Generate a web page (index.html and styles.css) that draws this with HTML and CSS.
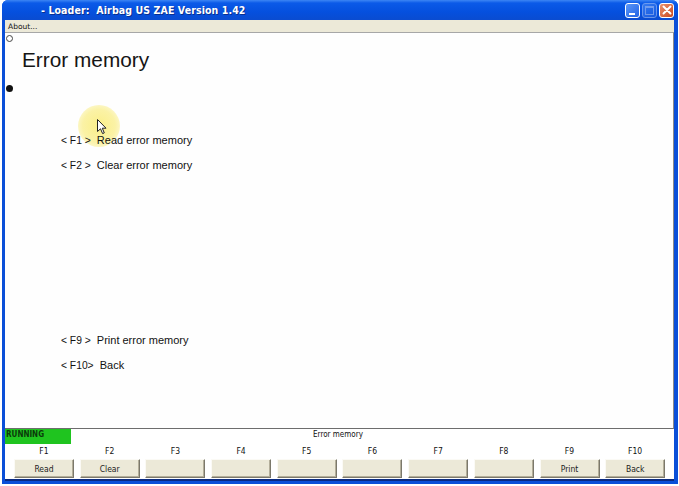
FILE: index.html
```html
<!DOCTYPE html>
<html>
<head>
<meta charset="utf-8">
<link rel="stylesheet" href="styles.css">
</head>
<body>
<div class="window">
  <div class="titlebar">
    <span class="title">- Loader:&nbsp; Airbag US ZAE Version 1.42</span>
    <div class="tbuttons">
      <span class="tb tb-min"><i></i></span>
      <span class="tb tb-max"><i></i></span>
      <span class="tb tb-close">
        <svg width="10" height="10" viewBox="0 0 10 10"><path d="M1.5 1.5 L8.5 8.5 M8.5 1.5 L1.5 8.5" stroke="#fff" stroke-width="2" stroke-linecap="round"/></svg>
      </span>
    </div>
  </div>
  <div class="frame">
    <div class="menubar"><span>About...</span></div>
    <div class="content">
      <span class="radio radio-open"></span>
      <h1 class="heading">Error memory</h1>
      <span class="radio radio-filled"></span>
      <div class="cursor-spot">
        <svg class="cursor" width="10" height="16" viewBox="0 0 10 16"><path d="M0.5 0.5 L0.5 12.5 L3.5 9.8 L5.6 14.6 L7.3 13.9 L5.3 9.2 L9 9.2 Z" fill="#fff" stroke="#222" stroke-width="1"/></svg>
      </div>
      <ul class="menu menu-top">
        <li><span class="key">&lt; F1 &gt;</span> Read error memory</li>
        <li><span class="key">&lt; F2 &gt;</span> Clear error memory</li>
      </ul>
      <ul class="menu menu-bottom">
        <li><span class="key">&lt; F9 &gt;</span> Print error memory</li>
        <li><span class="key">&lt; F10&gt;</span> Back</li>
      </ul>
    </div>
    <div class="footer">
      <div class="status">
        <span class="running">RUNNING</span>
        <span class="screen-name">Error memory</span>
      </div>
      <div class="fkeys">
        <div class="fkey"><span class="flabel">F1</span><span class="fbtn">Read</span></div>
        <div class="fkey"><span class="flabel">F2</span><span class="fbtn">Clear</span></div>
        <div class="fkey"><span class="flabel">F3</span><span class="fbtn"></span></div>
        <div class="fkey"><span class="flabel">F4</span><span class="fbtn"></span></div>
        <div class="fkey"><span class="flabel">F5</span><span class="fbtn"></span></div>
        <div class="fkey"><span class="flabel">F6</span><span class="fbtn"></span></div>
        <div class="fkey"><span class="flabel">F7</span><span class="fbtn"></span></div>
        <div class="fkey"><span class="flabel">F8</span><span class="fbtn"></span></div>
        <div class="fkey"><span class="flabel">F9</span><span class="fbtn">Print</span></div>
        <div class="fkey"><span class="flabel">F10</span><span class="fbtn">Back</span></div>
      </div>
    </div>
  </div>
</div>
</body>
</html>
```

FILE: styles.css
```css
html, body {
  margin: 0;
  padding: 0;
  background: #ffffff;
}
body {
  width: 679px;
  height: 486px;
  overflow: hidden;
  font-family: "Liberation Sans", Arial, sans-serif;
}
.window {
  width: 676px;
  height: 484px;
  margin-left: 2px;
  display: flex;
  flex-direction: column;
  background: #0a4fd8;
  border-radius: 6px 6px 0 0;
  box-sizing: border-box;
}
.titlebar {
  height: 20px;
  flex: none;
  display: flex;
  align-items: center;
  background: linear-gradient(#3d86f4 0px, #0b5ae8 3px, #0550de 12px, #0a4cd0 20px);
  border-radius: 6px 6px 0 0;
}
.title {
  margin-left: 39px;
  color: #ffffff;
  font-family: "DejaVu Sans Condensed", "DejaVu Sans", sans-serif;
  font-weight: bold;
  font-size: 10.5px;
  letter-spacing: 0.1px;
  text-shadow: 1px 1px 0 #0a2f8f;
}
.tbuttons {
  margin-left: auto;
  margin-right: 4px;
  display: flex;
  gap: 2px;
}
.tb {
  width: 13px;
  height: 13px;
  border: 1px solid #ffffff;
  border-radius: 3px;
  display: flex;
  align-items: center;
  justify-content: center;
  background: linear-gradient(135deg, #5b97f7, #2163e6);
}
.tb-min i {
  display: block;
  width: 6px;
  height: 2px;
  background: #ffffff;
  margin-top: 7px;
  margin-right: 2px;
}
.tb-max {
  opacity: 0.55;
  border-color: #b9cff7;
}
.tb-max i {
  display: block;
  width: 7px;
  height: 6px;
  border: 1px solid #c6d6f7;
  border-top-width: 2px;
}
.tb-close {
  background: linear-gradient(135deg, #e9926e, #c9491f);
}
.frame {
  flex: 1;
  display: flex;
  flex-direction: column;
  margin: 0 4px 3px 3px;
  background: #ffffff;
  border-bottom: 2px solid #0a2a80;
}
.menubar {
  height: 12px;
  flex: none;
  background: #ece9d8;
  font-family: "DejaVu Sans", sans-serif;
  font-size: 7.5px;
  color: #111;
  display: flex;
  align-items: center;
  padding-left: 3px;
}
.content {
  flex: 1;
  position: relative;
  background: #fefefe;
  border-top: 1px solid #a7a7a7;
  border-right: 1px solid #8a8a8a;
  border-bottom: 1px solid #6d6d6d;
}
.radio {
  position: absolute;
  left: 1px;
  width: 7px;
  height: 7px;
  border-radius: 50%;
  box-sizing: border-box;
}
.radio-open {
  top: 2px;
  border: 1px solid #444;
  background: #fff;
}
.radio-filled {
  top: 52px;
  background: #111;
}
.heading {
  margin: 0;
  padding: 13px 0 0 17px;
  font-weight: normal;
  font-size: 20.8px;
  color: #151515;
  line-height: 28px;
}
.menu {
  list-style: none;
  margin: 0;
  padding: 0 0 0 56px;
  font-size: 11px;
  color: #111;
  position: relative;
  z-index: 1;
}
.menu li {
  height: 25px;
  line-height: 14px;
  white-space: nowrap;
}
.key {
  font-size: 10.3px;
  margin-right: 3px;
}
.menu-top {
  margin-top: 59px;
}
.menu-bottom {
  margin-top: 150px;
}
.cursor-spot {
  position: absolute;
  z-index: 0;
  left: 73px;
  top: 72px;
  width: 42px;
  height: 42px;
  border-radius: 50%;
  background: radial-gradient(circle, rgba(250,238,130,0.95) 0%, rgba(250,240,150,0.85) 55%, rgba(252,246,190,0.5) 85%, rgba(255,255,255,0) 100%);
}
.cursor {
  position: absolute;
  left: 19px;
  top: 14px;
}
.footer {
  flex: none;
  height: 50px;
  background: #ffffff;
  display: flex;
  flex-direction: column;
}
.status {
  height: 16px;
  display: flex;
  align-items: flex-start;
  position: relative;
}
.running {
  width: 66px;
  height: 15px;
  background: #1fc41f;
  font-family: "DejaVu Sans Condensed", "DejaVu Sans", sans-serif;
  font-size: 8px;
  font-weight: bold;
  color: #0b3a0b;
  line-height: 11px;
  padding-left: 1px;
  box-sizing: border-box;
}
.screen-name {
  position: absolute;
  left: 0;
  right: 0;
  top: 0;
  line-height: 11px;
  text-align: center;
  font-family: "DejaVu Sans Condensed", "DejaVu Sans", sans-serif;
  font-size: 8px;
  color: #111;
  padding-right: 3px;
}
.fkeys {
  display: grid;
  grid-template-columns: repeat(10, 60px);
  column-gap: 5.7px;
  padding-left: 9px;
}
.fkey {
  display: flex;
  flex-direction: column;
  align-items: center;
}
.flabel {
  height: 14px;
  line-height: 12px;
  font-family: "DejaVu Sans Condensed", "DejaVu Sans", sans-serif;
  font-size: 8.5px;
  color: #111;
}
.fbtn {
  width: 60px;
  height: 19px;
  box-sizing: border-box;
  background: #ece9d8;
  border: 1px solid;
  border-color: #fbfaf5 #7b786b #7b786b #fbfaf5;
  box-shadow: inset -1px -1px 0 #b3ae9a;
  font-family: "DejaVu Sans Condensed", "DejaVu Sans", sans-serif;
  font-size: 8.5px;
  color: #222;
  display: flex;
  align-items: center;
  justify-content: center;
}
```
